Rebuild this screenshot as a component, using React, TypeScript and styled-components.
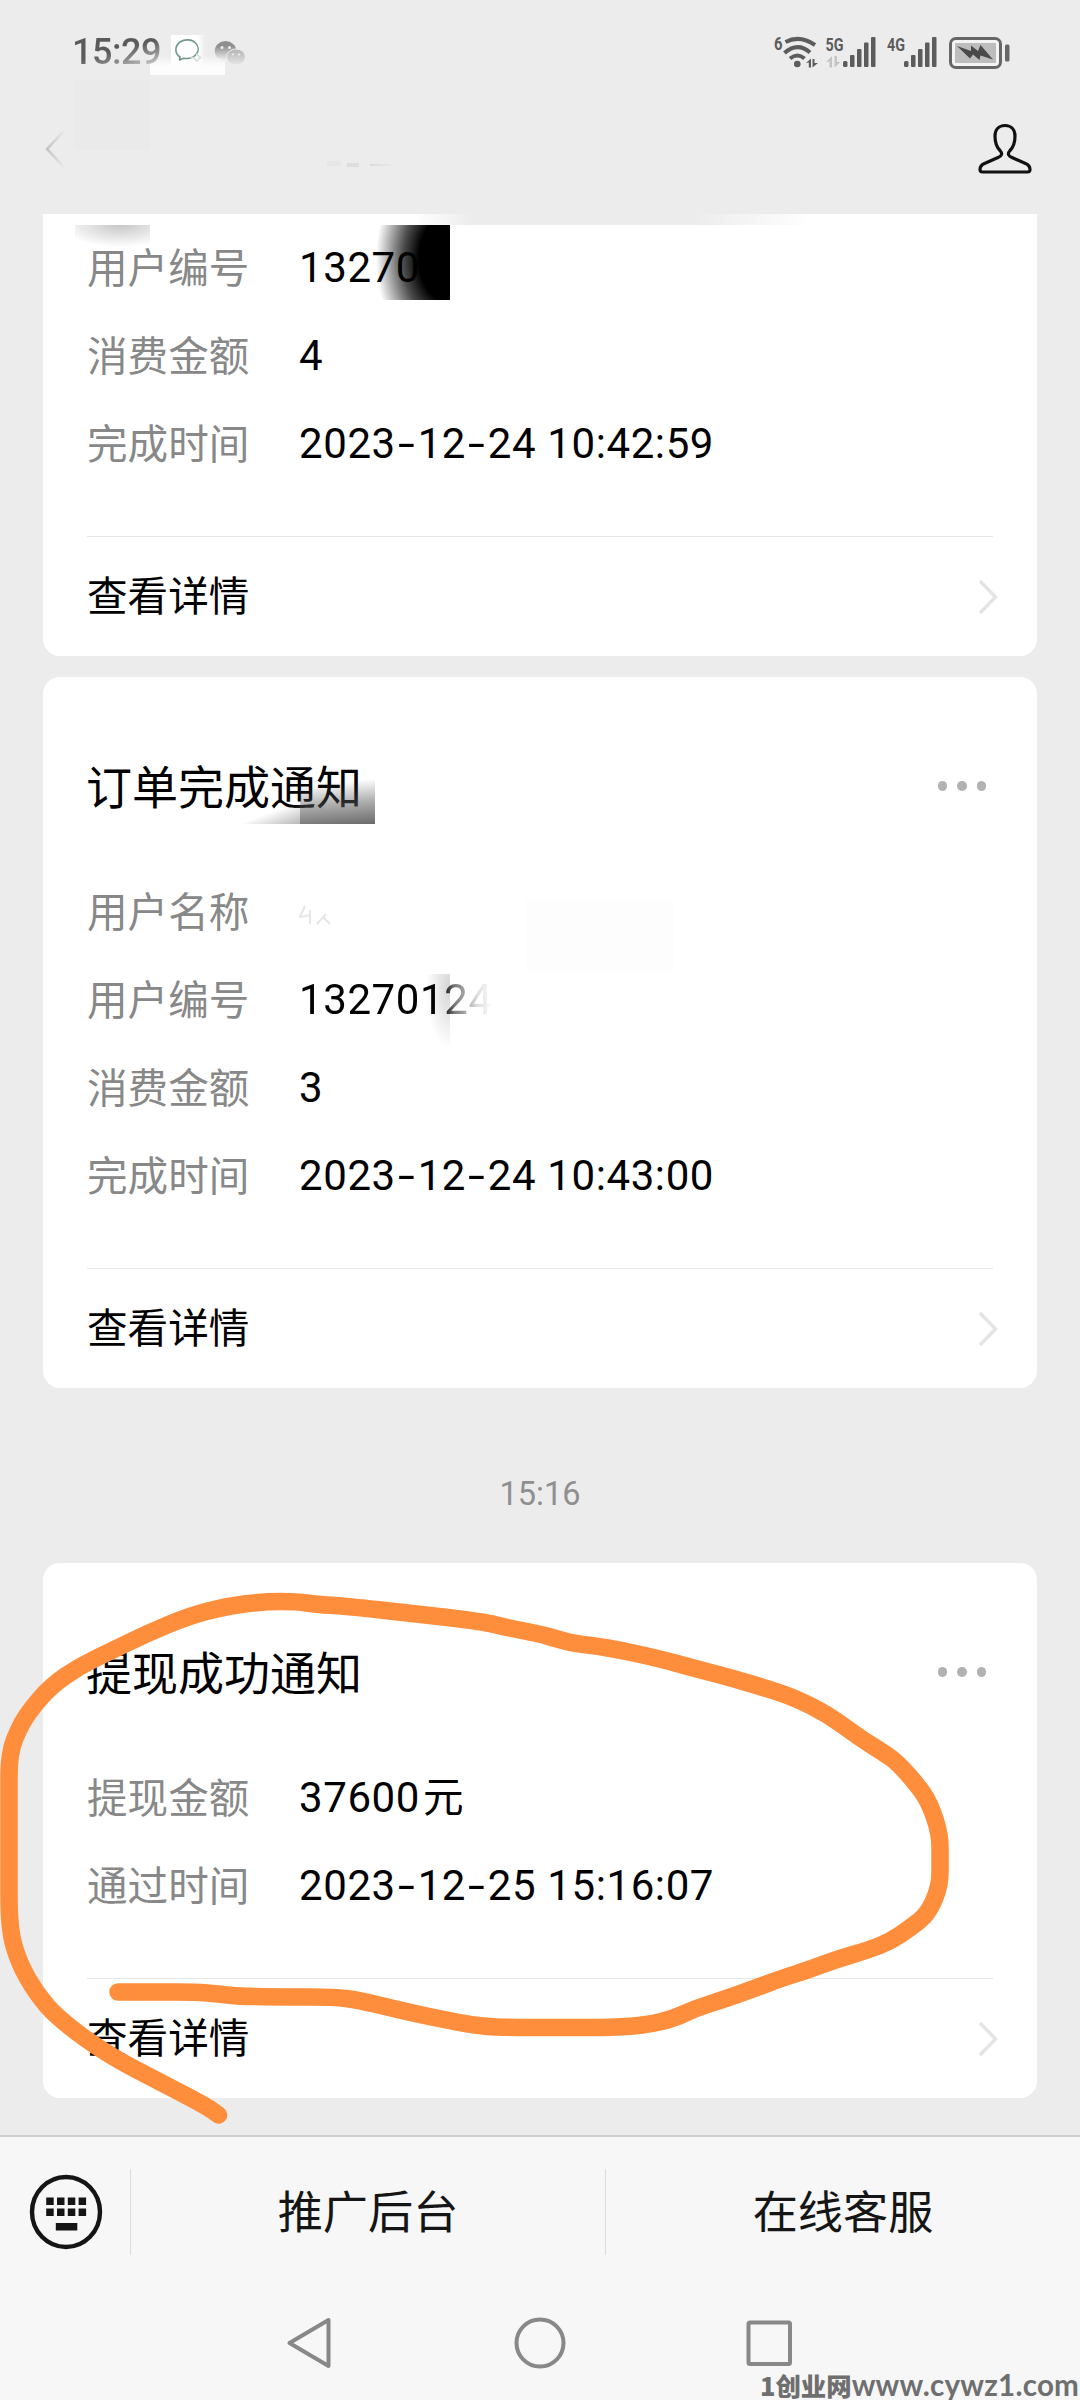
import React from "react";
import styled, { createGlobalStyle, css } from "styled-components";

const GlobalStyle = createGlobalStyle`
  html, body { margin: 0; padding: 0; background: #ececec; }
  * { box-sizing: border-box; }
`;

const cjk = `"Noto Sans CJK SC", sans-serif`;

const Screen = styled.div`
  position: relative;
  width: 1080px;
  height: 2400px;
  overflow: hidden;
  display: flex;
  flex-direction: column;
  background: #ececec;
  font-family: Roboto, ${cjk};
  color: #000;
`;

const Header = styled.header`
  position: relative;
  height: 214px;
  flex: none;
  display: flex;
  flex-direction: column;
`;

const StatusBar = styled.div`
  position: relative;
  z-index: 1;
  height: 104px;
  padding: 0 70px 0 72px;
  display: flex;
  align-items: center;
  justify-content: space-between;
`;

const StatusGroup = styled.div`
  display: flex;
  align-items: center;
`;

const Clock = styled.span`
  width: 102px;
  font: 500 36px/44px Roboto, sans-serif;
  letter-spacing: -0.5px;
  color: transparent;
  background: linear-gradient(165deg, #5a5a5a 45%, #8c8c8c 62%, #ddd 85%);
  background-clip: text;
  -webkit-background-clip: text;
`;

const NavBar = styled.div`
  height: 90px;
  padding: 0 48px 0 44px;
  display: flex;
  align-items: center;
  justify-content: space-between;
`;

const Smudge = styled.div<{ $x: number; $y: number; $w: number; $h: number; $bg: string }>`
  position: absolute;
  left: ${(p) => p.$x}px;
  top: ${(p) => p.$y}px;
  width: ${(p) => p.$w}px;
  height: ${(p) => p.$h}px;
  background: ${(p) => p.$bg};
  pointer-events: none;
`;

const Feed = styled.main`
  height: 1921px;
  flex: none;
  padding: 0 43px;
  display: flex;
  flex-direction: column;
`;

const Card = styled.section<{ $cut?: boolean }>`
  position: relative;
  flex: none;
  padding: 0 44px;
  background: #fff;
  border-radius: 17px;
  ${(p) =>
    p.$cut
      ? css`
          border-top-left-radius: 0;
          border-top-right-radius: 0;
          padding-top: 10px;
          height: 442px;
          margin-bottom: 21px;
        `
      : null}
`;

const CardHead = styled.div`
  height: 191px;
  padding: 0 7px 27px 0;
  display: flex;
  align-items: center;
  justify-content: space-between;
`;

const Title = styled.h2`
  margin: 0 0 0 -1px;
  padding-top: 49px;
  font: 400 46px/56px ${cjk};
`;

const Dots = styled.div`
  padding-top: 54px;
  display: flex;
  gap: 10px;
  i {
    width: 9.5px;
    height: 9.5px;
    border-radius: 50%;
    background: #b2b2b2;
  }
`;

const Rows = styled.dl`
  margin: 0;
  padding-bottom: 48px;
`;

const Row = styled.div`
  height: 88px;
  display: flex;
  align-items: center;
`;

const Label = styled.dt`
  width: 212px;
  padding-bottom: 5px;
  font: 400 40.6px/60px ${cjk};
  color: #888;
`;

const Value = styled.dd<{ $faded?: boolean }>`
  position: relative;
  z-index: 1;
  margin: 0;
  white-space: pre;
  font: 400 42px/60px Roboto, ${cjk};
  letter-spacing: 0.6px;
  ${(p) =>
    p.$faded
      ? css`
          color: transparent;
          background: linear-gradient(90deg, #000 74%, #777 80%, #ddd 92%, #fff 100%);
          background-clip: text;
          -webkit-background-clip: text;
        `
      : null}
`;

const Dash = styled.span`
  display: inline-block;
  width: 21.8px;
  text-align: center;
  transform: scaleX(1.45);
`;

const Unit = styled.span`
  display: inline-block;
  margin-top: -6px;
  font: 400 40.6px/54px ${cjk};
  padding-left: 3px;
`;

const Detail = styled.div`
  height: 120px;
  border-top: 1.5px solid #e6e6e6;
  display: flex;
  align-items: center;
  justify-content: space-between;
  svg {
    margin-right: -6px;
  }
`;

const DetailText = styled.span`
  padding-bottom: 5px;
  font: 400 40.6px/60px ${cjk};
`;

const TimeMark = styled.div`
  height: 175px;
  flex: none;
  padding-top: 37px;
  display: flex;
  align-items: center;
  justify-content: center;
  font: 400 32.5px/40px Roboto, sans-serif;
  color: #8f8f8f;
`;

const MenuBar = styled.nav`
  height: 152px;
  flex: none;
  display: flex;
  align-items: center;
  background: #f7f7f7;
  border-top: 2px solid #cfcfcf;
`;

const KeyboardCell = styled.div`
  width: 130px;
  display: flex;
  justify-content: center;
  padding-left: 1px;
`;

const MenuItem = styled.div`
  flex: 1;
  height: 86px;
  padding-bottom: 5px;
  border-left: 1.5px solid #dcdcdc;
  display: flex;
  align-items: center;
  justify-content: center;
  font: 400 45.2px/60px ${cjk};
  color: #151515;
`;

const SystemNav = styled.div`
  flex: 1;
  background: #f7f7f7;
  display: flex;
  justify-content: center;
  gap: 176px;
  padding-top: 28px;
`;

const Overlay = styled.svg`
  position: absolute;
  left: 0;
  top: 1563px;
`;

const Watermark = styled.div`
  position: absolute;
  left: 760px;
  top: 2365px;
  display: flex;
  align-items: center;
  white-space: nowrap;
  color: #6f6f6f;
  font: 900 25.4px/40px ${cjk};
  b {
    font: 700 29.6px/40px Lato, sans-serif;
    letter-spacing: 0.2px;
  }
`;

const Chevron = () => (
  <svg width="22" height="38" viewBox="0 0 22 38" fill="none" stroke="#e4e4e4" strokeWidth="3.4">
    <path d="M3 3 L18.5 19 L3 35" />
  </svg>
);

const ChatBubble = () => (
  <svg width="30" height="28" viewBox="0 0 30 28" fill="none">
    <path
      d="M6 19 C0.500 15.500 0.500 8 6 4 C11 0.800 18 1.200 21.500 5 C25 8.500 25 13 22 16.500 C19 20 14 21 9.500 20.200 L5.500 22 Z"
      stroke="#6f9a8a"
      strokeWidth="1.6"
      strokeLinejoin="round"
    />
    <path d="M16.500 20.500 l3-1.500 M22 15.500 l4.500 4 l-3.500 3.500 l-3.500-3" stroke="#cfdcd6" strokeWidth="1.5" />
  </svg>
);

const WeChat = () => (
  <svg width="32" height="28" viewBox="0 0 32 28">
    <defs>
      <linearGradient id="wc" x1="0" y1="0" x2="0" y2="1">
        <stop offset="0.25" stopColor="#8f8f8f" />
        <stop offset="0.95" stopColor="#efefef" />
      </linearGradient>
      <linearGradient id="wc2" x1="0" y1="0" x2="0" y2="1">
        <stop offset="0" stopColor="#b4b4b4" />
        <stop offset="1" stopColor="#e6e6e6" />
      </linearGradient>
    </defs>
    <ellipse cx="11.5" cy="11" rx="10.8" ry="10" fill="url(#wc)" />
    <circle cx="8" cy="7.5" r="1.5" fill="#eee" />
    <circle cx="15.5" cy="7.5" r="1.5" fill="#eee" />
    <ellipse cx="22" cy="17" rx="9.5" ry="8" fill="url(#wc2)" stroke="#ececec" strokeWidth="1" />
    <circle cx="19" cy="14.5" r="1.1" fill="#eee" />
    <circle cx="25" cy="14.5" r="1.1" fill="#eee" />
  </svg>
);

const WeChatSlot = styled.span`
  display: flex;
  margin: 3px 0 0 10px;
`;

const IndicatorStrip = styled.svg`
  overflow: visible;
  margin-top: 1px;
  font-family: Roboto, sans-serif;
  font-weight: 700;
`;

const Bars = ({ x }: { x: number }) => (
  <g fill="#5c5c5c">
    <rect x={x} y="25" width="4.5" height="6" rx="1.5" />
    <rect x={x + 7} y="19" width="4.5" height="12" rx="1" />
    <rect x={x + 14} y="13" width="4.5" height="18" rx="1" />
    <rect x={x + 21} y="6.5" width="4.5" height="24.5" rx="1" />
    <rect x={x + 28} y="1" width="4.5" height="30" rx="1" />
  </g>
);

/* Wi-Fi, both SIM signals and the charging battery share one 236px strip. */
const Indicators = () => (
  <IndicatorStrip width="236" height="34" viewBox="0 0 236 34">
    <g fill="#5c5c5c">
      <text x="0" y="13.5" fontSize="18" textLength="8.5" lengthAdjust="spacingAndGlyphs">6</text>
      <text x="51.5" y="15" fontSize="19" textLength="18" lengthAdjust="spacingAndGlyphs">5G</text>
      <text x="113" y="15" fontSize="19" textLength="18" lengthAdjust="spacingAndGlyphs">4G</text>
    </g>
    <g fill="none" stroke="#5c5c5c" strokeWidth="4">
      <path d="M11.5 6 Q26 -1.5 41 9" />
      <path d="M10.5 17 Q23.5 5.5 36 16.5" />
      <path d="M16 22.5 Q23.5 16.5 30.5 22.5" />
    </g>
    <circle cx="23.3" cy="28" r="3.3" fill="#5c5c5c" />
    <path d="M32 27 l5-4.5 v9 h-2.2 v-5z M38.5 23 h2 v4 h3.5 l-5.5 4.5z" fill="#5c5c5c" />
    <path d="M52 26 l6-6 v11.5 h-2.5 v-6z M60.5 20 h2.5 v6 h3.5 l-6 5.5z" fill="#c4c4c4" />
    <Bars x={69} />
    <Bars x={130} />
    <rect x="176.5" y="2.5" width="50" height="29" rx="5.5" fill="#f4f4f4" stroke="#666" strokeWidth="3" />
    <rect x="181" y="7" width="41" height="20" rx="1" fill="#bdbdbd" />
    <path d="M183 10 L197 15 L197 9.5 L204 15 L206.5 9 L219 23.5 L206.5 19.5 L205.5 24 L199 18.5 L196 22.5 Z" fill="#4a4a4a" />
    <rect x="231" y="8.5" width="4.5" height="17" rx="1.5" fill="#666" />
  </IndicatorStrip>
);

const Person = () => (
  <svg width="54" height="52" viewBox="0 0 54 52" fill="none" stroke="#111" strokeWidth="3.2" strokeLinejoin="round">
    <path d="M27 2.5 C20.500 2.500 17 7 17 13 C17 20 18.500 24 22 27.500 C25 31 23.500 33 20 34.500 L6.500 40.500 C3 42 2 44 2 46.500 Q2 49 4.500 49 H49.500 Q52 49 52 46.500 C52 44 51 42 47.500 40.500 L34 34.500 C30.500 33 29 31 32 27.500 C35.500 24 37 20 37 13 C37 7 33.500 2.500 27 2.500 Z" />
  </svg>
);

const Keyboard = () => (
  <svg width="74" height="76" viewBox="0 0 74 76" fill="#151515">
    <ellipse cx="37" cy="38" rx="34" ry="35" fill="none" stroke="#151515" strokeWidth="4.4" />
    {[0, 1].map((r) =>
      [0, 1, 2, 3].map((c) => (
        <rect key={`${r}${c}`} x={17.2 + c * 10.8} y={23.5 + r * 11} width="7.5" height="7.5" />
      ))
    )}
    <rect x="26.8" y="49" width="21.5" height="7.5" />
  </svg>
);

const DateText = ({ children }: { children: string }) => (
  <>
    {children.split(/(-)/).map((part, i) => (part === "-" ? <Dash key={i}>-</Dash> : part))}
  </>
);

type Field = { name: string; value: React.ReactNode; faded?: boolean };

const Fields = ({ items }: { items: Field[] }) => (
  <Rows>
    {items.map((f) => (
      <Row key={f.name}>
        <Label>{f.name}</Label>
        <Value $faded={f.faded}>{f.value}</Value>
      </Row>
    ))}
  </Rows>
);

const More = () => (
  <Dots>
    <i />
    <i />
    <i />
  </Dots>
);

const ViewDetail = () => (
  <Detail>
    <DetailText>查看详情</DetailText>
    <Chevron />
  </Detail>
);

/* Remains of an erased name. */
const NameTrace = () => (
  <svg width="34" height="22" viewBox="0 0 34 22" fill="none" stroke="#e6e6e6" strokeWidth="2">
    <path d="M6 2 L1 13 L12 11 M11 6 V20 M27 10 L18 20 M24 13 L31 20" />
  </svg>
);

/* Points of the hand-drawn marker loop, in page coordinates. */
const stroke: [number, number][] = [
  [118, 1992], [157, 1992], [196, 1992], [218, 1994], [241, 1996.5], [288, 1997], [334, 1997], [358, 2000], [410, 2012.5],
  [441, 2019], [472, 2025], [499, 2027.5], [556, 2027.5], [614, 2027.5], [647, 2025], [674, 2018.5], [695, 2008.5],
  [722, 2000], [753, 1989], [784, 1977.5], [805, 1971], [836, 1959.5], [870, 1949.5], [891, 1941], [910, 1928],
  [928, 1914], [940, 1886], [940, 1860], [940, 1834], [930, 1804], [919, 1787], [898, 1763], [884, 1753], [860, 1738],
  [828, 1714.5], [795, 1698], [767, 1688.5], [726, 1676.5], [695, 1668.5], [657, 1658], [605, 1647], [574, 1643.5],
  [557, 1639], [540, 1634], [509, 1628], [482, 1621.5], [413, 1613.5], [344, 1606], [317, 1604.5], [297, 1601.5], [265, 1601.5],
  [227, 1606], [189, 1616], [148, 1633], [110, 1651.5], [79, 1666.5], [51, 1686], [31, 1709], [20, 1726], [9, 1753],
  [9, 1800], [9, 1860], [9, 1929], [19, 1963], [36, 1993], [58, 2018.5], [107, 2054.5], [162, 2083], [206, 2106], [218.6, 2115],
];

const smooth = (pts: [number, number][]) => {
  let d = `M${pts[0][0]} ${pts[0][1]}`;
  for (let i = 1; i < pts.length - 1; i++) {
    const mx = (pts[i][0] + pts[i + 1][0]) / 2;
    const my = (pts[i][1] + pts[i + 1][1]) / 2;
    d += ` Q${pts[i][0]} ${pts[i][1]} ${mx} ${my}`;
  }
  const last = pts[pts.length - 1];
  return `${d} L${last[0]} ${last[1]}`;
};

export default function App() {
  return (
    <Screen>
      <GlobalStyle />
      <Header>
        <Smudge $x={75} $y={80} $w={75} $h={70} $bg="#eaeaea" />
        <Smudge $x={150} $y={55} $w={75} $h={20} $bg="linear-gradient(180deg, rgba(255,255,255,0), #fdfdfd 55%)" />
        <Smudge $x={171} $y={35} $w={34} $h={30} $bg="linear-gradient(90deg, #fff 80%, rgba(255,255,255,0))" />
        <StatusBar>
          <StatusGroup>
            <Clock>15:29</Clock>
            <ChatBubble />
            <WeChatSlot>
              <WeChat />
            </WeChatSlot>
          </StatusGroup>
          <StatusGroup>
            <Indicators />
          </StatusGroup>
        </StatusBar>
        <NavBar>
          <svg width="24" height="44" viewBox="0 0 24 44" fill="none" strokeWidth="2.6">
            <defs>
              <linearGradient id="back" x1="0" x2="1" y1="0" y2="0">
                <stop offset="0" stopColor="#c4c4c4" />
                <stop offset="1" stopColor="#ebebeb" />
              </linearGradient>
            </defs>
            <path d="M21 3 L3 22 L21 41" stroke="url(#back)" />
          </svg>
          <Person />
        </NavBar>
        <Smudge $x={327} $y={161} $w={14} $h={5} $bg="#e6e6e6" />
        <Smudge $x={347} $y={163} $w={12} $h={4} $bg="#dedede" />
        <Smudge $x={370} $y={164} $w={25} $h={2} $bg="linear-gradient(90deg, #dadada, #ececec)" />
      </Header>

      <Feed>
        <Card $cut>
          <Smudge $x={370} $y={0} $w={400} $h={11} $bg="linear-gradient(90deg, rgba(236,236,236,0), #ececec 15%, #ececec 70%, rgba(236,236,236,0))" />
          <Smudge $x={32} $y={11} $w={75} $h={22} $bg="radial-gradient(ellipse 60px 22px at 60% 0%, #c6c6c6, rgba(255,255,255,0))" />
          <Smudge $x={326} $y={11} $w={81} $h={75} $bg="radial-gradient(ellipse 78px 110px at 100% 45%, #000 40%, rgba(0,0,0,0.7) 60%, rgba(0,0,0,0) 95%)" />
          <Fields
            items={[
              { name: "用户编号", value: "13270" },
              { name: "消费金额", value: "4" },
              { name: "完成时间", value: <DateText>2023-12-24 10:42:59</DateText> },
            ]}
          />
          <ViewDetail />
        </Card>

        <Card>
          <CardHead>
            <Title>订单完成通知</Title>
            <More />
          </CardHead>
          <Smudge $x={200} $y={127} $w={57} $h={20} $bg="linear-gradient(160deg, rgba(160,160,160,0) 45%, rgba(160,160,160,0.75))" />
          <Smudge $x={257} $y={103} $w={75} $h={44} $bg="linear-gradient(175deg, rgba(90,90,90,0) 10%, rgba(90,90,90,0.5) 55%, rgba(90,90,90,0.9))" />
          <Smudge $x={380} $y={297} $w={27} $h={75} $bg="radial-gradient(ellipse 24px 62px at 100% 18%, rgba(0,0,0,0.17), rgba(0,0,0,0))" />
          <Smudge $x={483} $y={222} $w={147} $h={72} $bg="#fdfdfd" />
          <Fields
            items={[
              { name: "用户名称", value: <NameTrace /> },
              { name: "用户编号", value: "13270124", faded: true },
              { name: "消费金额", value: "3" },
              { name: "完成时间", value: <DateText>2023-12-24 10:43:00</DateText> },
            ]}
          />
          <ViewDetail />
        </Card>

        <TimeMark>15:16</TimeMark>

        <Card>
          <CardHead>
            <Title>提现成功通知</Title>
            <More />
          </CardHead>
          <Fields
            items={[
              { name: "提现金额", value: <>37600<Unit>元</Unit></> },
              { name: "通过时间", value: <DateText>2023-12-25 15:16:07</DateText> },
            ]}
          />
          <ViewDetail />
        </Card>
      </Feed>

      <MenuBar>
        <KeyboardCell>
          <Keyboard />
        </KeyboardCell>
        <MenuItem>推广后台</MenuItem>
        <MenuItem>在线客服</MenuItem>
      </MenuBar>

      <SystemNav>
        <svg width="56" height="56" viewBox="0 0 56 56" fill="none" stroke="#888" strokeWidth="4" strokeLinejoin="round">
          <path d="M48.500 5 V51 L9.500 28 Z" />
        </svg>
        <svg width="56" height="56" viewBox="0 0 56 56" fill="none" stroke="#888" strokeWidth="4">
          <circle cx="28" cy="28" r="23.5" />
        </svg>
        <svg width="56" height="56" viewBox="0 0 56 56" fill="none" stroke="#888" strokeWidth="4">
          <rect x="4.5" y="7.5" width="41.5" height="41.5" rx="1.5" />
        </svg>
      </SystemNav>

      <Overlay width="1080" height="570" viewBox="0 1563 1080 570" fill="none" stroke="#ff8e3c" strokeWidth="17.5" strokeLinecap="round" strokeLinejoin="round">
        <path d={smooth(stroke)} />
      </Overlay>

      <Watermark>
        1创业网<b>www.cywz1.com</b>
      </Watermark>
    </Screen>
  );
}
